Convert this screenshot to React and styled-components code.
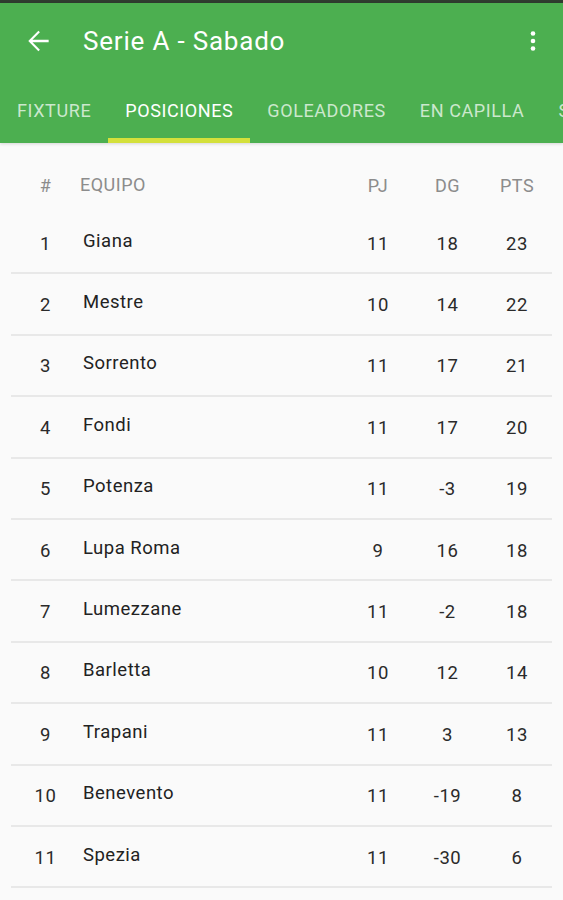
import React from 'react';
import styled, { createGlobalStyle } from 'styled-components';

const GlobalStyle = createGlobalStyle`
  html, body {
    margin: 0;
    padding: 0;
    background: #fafafa;
    font-family: Roboto, "Noto Sans", sans-serif;
  }
`

const Screen = styled.div`
  width: 563px;
  height: 900px;
  overflow: hidden;
  background: #fafafa;
`

const StatusStrip = styled.div`
  height: 3px;
  background: #2f3d2f;
`

const AppBar = styled.header`
  background: #4caf50;
  box-shadow: 0 1px 3px rgba(0, 0, 0, 0.15);
`

const Toolbar = styled.div`
  height: 77px;
  display: flex;
  align-items: center;
  padding: 0 14px 0 22px;
`

const IconButton = styled.div`
  width: 32px;
  height: 32px;
  display: flex;
  align-items: center;
  justify-content: center;
  margin-top: -2px;
`

const Title = styled.h1`
  flex: 1;
  margin: -2px 0 0 29px;
  color: #fff;
  font-size: 26px;
  font-weight: 400;
  letter-spacing: 0.8px;
`

const Tabs = styled.nav`
  height: 63px;
  display: flex;
  white-space: nowrap;
`

const Tab = styled.div`
  position: relative;
  flex: none;
  display: flex;
  align-items: center;
  padding: 0 17px 2px;
  color: ${p => (p.active ? '#fff' : 'rgba(255, 255, 255, 0.72)')};
  font-size: 18px;
  font-weight: 400;
  letter-spacing: 0.6px;

  &::after {
    content: '';
    display: ${p => (p.active ? 'block' : 'none')};
    position: absolute;
    left: 0;
    right: 0;
    bottom: 0;
    height: 5px;
    background: #d4e03b;
  }
`

const Table = styled.div`
  padding: 12px 11px 0 11px;
`

const HeadRow = styled.div`
  height: 58px;
  display: grid;
  grid-template-columns: 69px 1fr 70px 69px 70px;
  align-items: center;
  color: #8c8c8c;
  font-size: 18px;
  letter-spacing: 0.5px;
`

const Row = styled.div`
  height: 59.4px;
  display: grid;
  grid-template-columns: 69px 1fr 70px 69px 70px;
  align-items: center;
  border-bottom: 2px solid #e8e8e8;
  color: #2a2a2a;
  font-size: 18.5px;
  letter-spacing: 0.5px;
`

const Cell = styled.div`
  text-align: center;
  padding-top: 2px;
`

const Team = styled.div`
  padding-left: ${p => (p.head ? '0' : '3px')};
  margin-bottom: ${p => (p.head ? '0' : '4px')};
  color: ${p => (p.head ? '#8c8c8c' : '#222')};
`

const teams = [
  [1, 'Giana', 11, 18, 23],
  [2, 'Mestre', 10, 14, 22],
  [3, 'Sorrento', 11, 17, 21],
  [4, 'Fondi', 11, 17, 20],
  [5, 'Potenza', 11, -3, 19],
  [6, 'Lupa Roma', 9, 16, 18],
  [7, 'Lumezzane', 11, -2, 18],
  [8, 'Barletta', 10, 12, 14],
  [9, 'Trapani', 11, 3, 13],
  [10, 'Benevento', 11, -19, 8],
  [11, 'Spezia', 11, -30, 6],
]

const tabs = ['FIXTURE', 'POSICIONES', 'GOLEADORES', 'EN CAPILLA', 'S']

function App() {
  return (
    <Screen>
      <GlobalStyle />
      <StatusStrip />
      <AppBar>
        <Toolbar>
          <IconButton>
            <svg width="32" height="32" viewBox="0 0 24 24" fill="#fff">
              <path d="M20 11.1H7.83l5.59-5.59L12.3 4.4 4.7 12l7.6 7.6 1.12-1.11-5.59-5.59H20v-1.8z" />
            </svg>
          </IconButton>
          <Title>Serie A - Sabado</Title>
          <IconButton>
            <svg width="24" height="24" viewBox="0 0 24 24" fill="#fff">
              <circle cx="12" cy="4.5" r="2.3" />
              <circle cx="12" cy="12" r="2.3" />
              <circle cx="12" cy="19.5" r="2.3" />
            </svg>
          </IconButton>
        </Toolbar>
        <Tabs>
          {tabs.map(t => (
            <Tab key={t} active={t === 'POSICIONES'}>{t}</Tab>
          ))}
        </Tabs>
      </AppBar>
      <Table>
        <HeadRow>
          <Cell>#</Cell>
          <Team head>EQUIPO</Team>
          <Cell>PJ</Cell>
          <Cell>DG</Cell>
          <Cell>PTS</Cell>
        </HeadRow>
        {teams.map(([pos, name, pj, dg, pts]) => (
          <Row key={pos}>
            <Cell>{pos}</Cell>
            <Team>{name}</Team>
            <Cell>{pj}</Cell>
            <Cell>{dg}</Cell>
            <Cell>{pts}</Cell>
          </Row>
        ))}
      </Table>
    </Screen>
  );
}

export default App;
